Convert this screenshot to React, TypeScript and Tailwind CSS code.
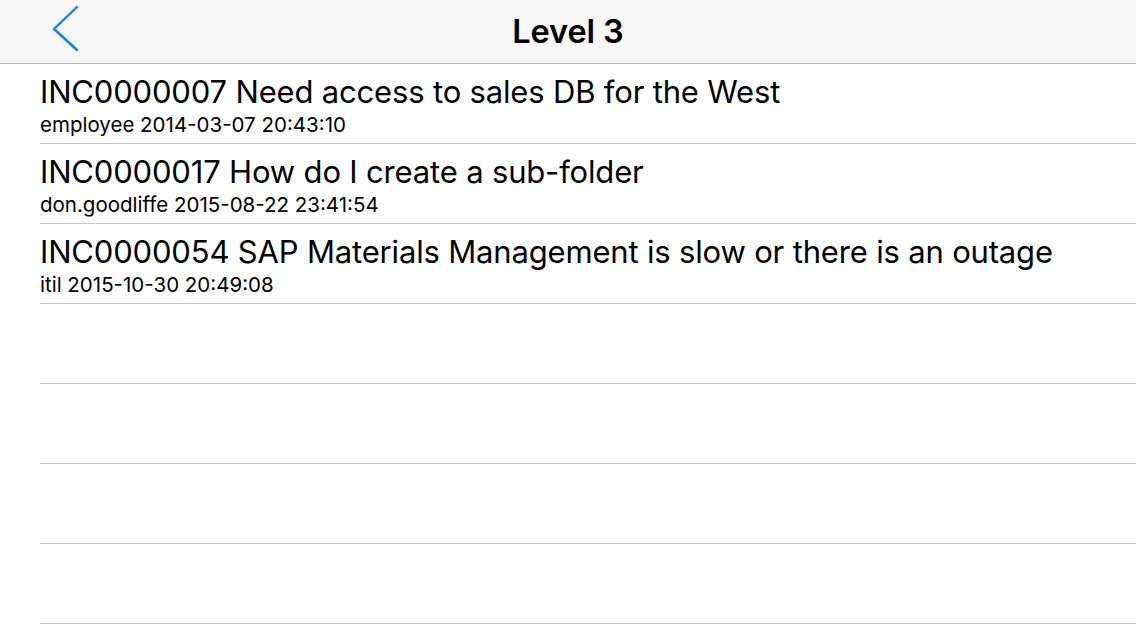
const items = [
  { title: 'INC0000007 Need access to sales DB for the West', sub: 'employee 2014-03-07 20:43:10' },
  { title: 'INC0000017 How do I create a sub-folder', sub: 'don.goodliffe 2015-08-22 23:41:54' },
  { title: 'INC0000054 SAP Materials Management is slow or there is an outage', sub: 'itil 2015-10-30 20:49:08' },
  null,
  null,
  null,
  null,
];

const App = () => {
  return (
    <div className="w-[1136px] h-[640px] bg-white overflow-hidden font-['Inter','Noto_Sans',sans-serif] text-black">
      {/* Nav bar */}
      <div className="relative h-16 bg-[#f7f7f7] border-b border-[#b2b2b2] flex items-center justify-center">
        <button className="absolute left-[50px] top-[5px] w-[32px] h-[48px] flex items-center justify-center">
          <svg width="32" height="48" viewBox="0 0 32 48" fill="none">
            <path d="M27 2 L4 24 L27 45" stroke="#157efb" strokeWidth="2.4" strokeLinecap="round" strokeLinejoin="round" />
          </svg>
        </button>
        <h1 className="text-[32.5px] font-semibold tracking-[-0.1px] mt-[1px]">Level 3</h1>
      </div>

      {/* List */}
      <div className="ml-10">
        {items.map((item, i) => (
          <div key={i} className="h-20 border-b border-[#c8c7cc] flex flex-col pt-[10px]">
            {item && (
              <>
                <div className="text-[31px] leading-[36px] tracking-[-0.17px] whitespace-nowrap">{item.title}</div>
                <div className="text-[20.5px] leading-[26px] mt-[2px] whitespace-nowrap">{item.sub}</div>
              </>
            )}
          </div>
        ))}
      </div>
    </div>
  );
};

export default App;
